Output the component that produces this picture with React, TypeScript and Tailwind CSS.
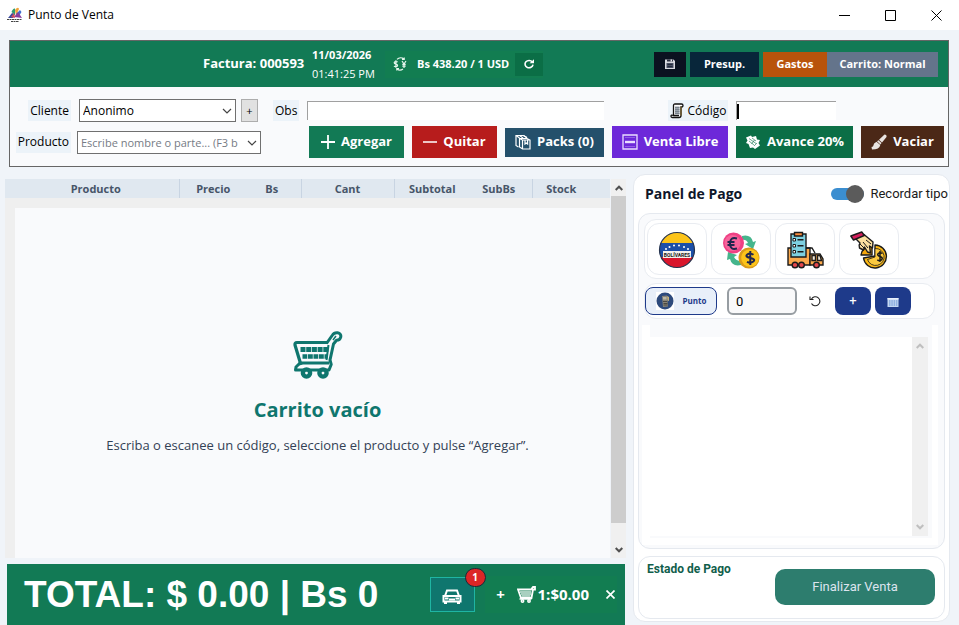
import clsx from 'clsx';
import { useState } from 'react';
import type { ReactNode } from 'react';

const COLUMNS = [
  { label: 'Producto', className: 'pl-2' },
  { label: 'Precio', className: 'w-[68px] border-l' },
  { label: 'Bs', className: 'w-[54px] pr-1' },
  { label: 'Cant', className: 'w-[93px] border-l' },
  { label: 'Subtotal', className: 'w-[76px] border-l' },
  { label: 'SubBs', className: 'w-[62px] pr-1' },
  { label: 'Stock', className: 'w-[78px] border-l pr-5' },
];

/* ---------- icons ---------- */

function AppLogo() {
  return (
    <svg viewBox="0 0 16 16" className="h-4 w-4" aria-hidden="true">
      <path d="M1 11l4-5 3 1-2 4z" fill="#3b4a9c" />
      <path d="M4.500 5Q6 1 8 1.500L8 8z" fill="#2f9e6e" />
      <path d="M8 3Q11-1 12 2L9 9z" fill="#f0a43a" />
      <path d="M9 7l4-4 1.500 2L12 9z" fill="#3f6fd0" />
      <path d="M7 10l4-5 4 6z" fill="#8a3d9e" />
      <path d="M4 10l3-4 1 5z" fill="#d1495b" />
      <path d="M0 12.500h15M4 14.500h8" stroke="#444" strokeWidth="1.200" strokeDasharray="2 .5" />
    </svg>
  );
}

function Chevron({ className = '' }: { className?: string }) {
  return (
    <svg viewBox="0 0 10 6" className={clsx('h-[6px] w-[10px]', className)} fill="none" aria-hidden="true">
      <path d="M1 1l4 4 4-4" stroke="currentColor" strokeWidth="1.2" />
    </svg>
  );
}

function ScrollArrow({ up = false }: { up?: boolean }) {
  return (
    <svg viewBox="0 0 8 6" className="h-[6px] w-[8px]" fill="none" aria-hidden="true">
      <path d={up ? 'M.7 5l3.3-3.3L7.3 5' : 'M.7 1L4 4.3 7.3 1'} stroke="currentColor" strokeWidth="2" />
    </svg>
  );
}

function ExchangeIcon() {
  return (
    <svg viewBox="0 0 14 14" className="h-[14px] w-[14px]" fill="none" stroke="#e6f7ee" strokeWidth="1.200" aria-hidden="true">
      <path d="M4.6 5.2C4 4.3 1.2 4.2 1.2 5.7c0 1.7 3.4 1 3.4 2.7 0 1.5-2.8 1.6-3.6.6M2.9 3.3v7.4" />
      <path d="M9 4l2 3 2-3M11 7v4M9.3 7.4h3.4M9.3 9.2h3.4" />
      <path d="M4 2.4C6 .4 9 .4 11 2.2M11.2.4v2H9M10 12c-2 1.600-4.400 1.400-6-.2M3.800 13.600v-2H6" />
    </svg>
  );
}

function RefreshIcon() {
  return (
    <svg viewBox="0 0 12 12" className="h-3 w-3" fill="none" aria-hidden="true">
      <path d="M9.300 4A4 3.600 0 1 0 10 6.600" stroke="#fff" strokeWidth="1.600" />
      <path d="M6.500 5.200h4.500V1.300z" fill="#fff" />
    </svg>
  );
}

function FloppyIcon() {
  return (
    <svg viewBox="0 0 12 12" className="h-3 w-3" aria-hidden="true">
      <path d="M1 1.500h8.500L11 3v8H1z" fill="#d9d9e0" />
      <path d="M3 1.500h6v2H3z" fill="#2b2f3f" />
      <path d="M6.600 1.500h1.400v2H6.600z" fill="#e8e8ee" />
      <path d="M2.500 5h7v5h-7z" fill="#4a5064" />
      <path d="M3.500 6.500h5M3.500 8.500h5" stroke="#1b2233" strokeWidth=".8" />
    </svg>
  );
}

function ScrollDocIcon() {
  return (
    <svg viewBox="0 0 14 16" className="h-4 w-[14px]" fill="none" stroke="#111" aria-hidden="true">
      <path d="M3.500 12.500V2.500Q3.500 1 5 1h6.500Q13 1 13 2.500T11 4v8.500Q11 14.500 9 14.500H2.500Q1 14.500 1 13t2.500-.5H9" fill="#fff" strokeWidth="1.300" />
      <path d="M5 3.500h4.500v8H5z" fill="#9aa3ad" stroke="none" />
      <path d="M5 4.500h4.500M5 6.500h4.500M5 8.500h4.500M5 10.500h4.500" stroke="#6b7580" strokeWidth=".7" />
      <path d="M11 3.500v9" strokeWidth="1.400" stroke="#6f5a2a" />
    </svg>
  );
}

function PlusIcon() {
  return (
    <svg viewBox="0 0 14 14" className="h-[14px] w-[14px]" aria-hidden="true">
      <path d="M7 0v14M0 7h14" stroke="#fff" strokeWidth="1.800" />
    </svg>
  );
}

function MinusIcon() {
  return (
    <svg viewBox="0 0 14 14" className="h-[14px] w-[14px]" aria-hidden="true">
      <path d="M0 7h14" stroke="#f3dcdc" strokeWidth="1.800" />
    </svg>
  );
}

function PackIcon() {
  return (
    <svg viewBox="0 0 16 16" className="h-4 w-4" fill="none" stroke="#fff" strokeWidth="1.200" aria-hidden="true">
      <path d="M3.500 13L1 11.500V1.500h7.500L12 3.500" />
      <path d="M1 1.500L4.500 4M4.500 1.500L8 4M8.500 1.500L12 4" />
      <path d="M4.500 4.500H12l3 1.500v9H7.500l-3-2zM4.500 4.500l3 1.500v9M7.500 6H15" />
      <path d="M10 6v4l1.300-1 1.300 1V6" />
    </svg>
  );
}

function FreeSaleIcon() {
  return (
    <svg viewBox="0 0 16 16" className="h-4 w-4" fill="none" stroke="#e9ddff" aria-hidden="true">
      <path d="M1 1h14v14H1z" strokeWidth="1.300" />
      <path d="M3 3.500h10M3 12.500h10" strokeWidth=".5" opacity=".6" />
      <path d="M3 8h10" strokeWidth="2.400" />
    </svg>
  );
}

function CashIcon() {
  return (
    <svg viewBox="0 0 16 16" className="h-4 w-4" aria-hidden="true">
      <path d="M1 3.500L6 1.500l1 1.500 4-1 1 3.500 3 .500-1.500 3 1.500 2.500-5 3.500L8 13.500l-3 .500-1.500-4-2.500-1 1.500-2.500z" fill="#fff" />
      <path d="M4 4.500l7 5M4 7l5 4M7 4l4 3M9.500 6l-3 4M12 9l-3 3" stroke="#0b6e46" strokeWidth=".6" />
    </svg>
  );
}

function BrushIcon() {
  return (
    <svg viewBox="0 0 16 16" className="h-4 w-4" fill="#e9e4e0" aria-hidden="true">
      <path d="M13.500.500q2.500 0 2 2.500L11 8.500 8 5.700z" />
      <path d="M7.500 6.200l3 2.800-1 1.500L6 7.300z" />
      <path d="M5.500 7.800l3.800 3.200Q8.500 15.500 1 15.500L.500 13 2 12.500q.500-3.500 3.500-4.700z" />
    </svg>
  );
}

function CartIcon() {
  return (
    <svg viewBox="0 0 50 48" className="h-12 w-[50px] text-[#0f766e]" fill="none" stroke="currentColor" aria-hidden="true">
      <path d="M35 11.500H4Q1.500 11.500 2 14l6 20" strokeWidth="3.200" />
      <path d="M33.500 12.500L39.500 4Q41 1.500 44.500 1.800q4 .700 3.200 4.500-.7 3-4.200 3L40.500 13 37 29l1.200 4.500L36 39H2.500l.500-3 4-4h29" strokeWidth="3" strokeLinejoin="round" />
      <path d="M40 9l3-4" strokeWidth="1.500" />
      <path d="M7.500 18.500h28" strokeWidth="5" strokeDasharray="5 .700" />
      <path d="M9.500 25.500h25" strokeWidth="4.500" strokeDasharray="4.800 .700" />
      <path d="M35.500 14l-2 15" strokeWidth="2" />
      <circle cx="13.500" cy="42" r="3.600" strokeWidth="4.400" />
      <circle cx="30" cy="42" r="3.600" strokeWidth="4.400" />
    </svg>
  );
}

function MiniCartIcon() {
  return (
    <svg viewBox="0 0 19 17" className="h-[17px] w-[19px]" fill="none" stroke="#fff" aria-hidden="true">
      <path d="M1 3.500h13L16 1h2v2.500h-2L14.500 12H4z" strokeWidth="1.800" />
      <path d="M3 6h11M4 8h10M4.500 10h9" strokeWidth="1.300" opacity=".85" />
      <path d="M2.500 13h12" strokeWidth="1.500" />
      <circle cx="5.500" cy="15" r="1.200" strokeWidth="1.500" />
      <circle cx="12" cy="15" r="1.200" strokeWidth="1.500" />
    </svg>
  );
}

function CarIcon() {
  return (
    <svg viewBox="0 0 20 16" className="h-4 w-5" fill="none" stroke="#fff" aria-hidden="true">
      <path d="M3 7l2-5.500h10L17 7" strokeWidth="2" />
      <path d="M1.500 7h17v5.500h-17z" strokeWidth="2" />
      <path d="M3 9.500h3.500M13.500 9.500H17M7 10.500h6" strokeWidth="1.800" />
      <path d="M3.500 12v3M16.500 12v3" strokeWidth="3" />
    </svg>
  );
}

function BolivaresIcon() {
  return (
    <svg viewBox="0 0 38 38" className="h-[38px] w-[38px]" aria-hidden="true">
      <clipPath id="bolivares-disc">
        <circle cx="19" cy="19" r="17.500" />
      </clipPath>
      <g clipPath="url(#bolivares-disc)">
        <path d="M0 0h38v12H0z" fill="#fcc419" />
        <path d="M0 12h38v14H0z" fill="#1c4fa8" />
        <path d="M0 26h38v12H0z" fill="#d9162c" />
      </g>
      <g fill="#fff">
        <circle cx="8" cy="18" r="1" />
        <circle cx="11.500" cy="16" r="1" />
        <circle cx="16" cy="14.500" r="1" />
        <circle cx="21" cy="14.500" r="1" />
        <circle cx="26" cy="16" r="1" />
        <circle cx="30" cy="18" r="1" />
      </g>
      <circle cx="19" cy="19" r="17.500" fill="none" stroke="#26334d" strokeWidth="1.200" />
      <path d="M5 20h28v7H5z" fill="#f4f1ec" />
      <text x="19" y="25.500" textAnchor="middle" fontSize="5" fontWeight="700" fill="#222" fontFamily="Roboto, sans-serif">
        BOLÍVARES
      </text>
    </svg>
  );
}

function CurrencyIcon() {
  return (
    <svg viewBox="0 0 38 38" className="h-[38px] w-[38px]" aria-hidden="true">
      <path d="M20 5q9-2 11 6l3-1-3 8-8-5 3-1q-2-4-6-3z" fill="#45b58c" />
      <path d="M19 34q-9 2-11-6l-3 1 1-8 9 3-3 2q2 4 7 4z" fill="#45b58c" />
      <circle cx="11.500" cy="12" r="10.500" fill="#ef4084" />
      <circle cx="10.500" cy="12" r="8" fill="#f7639b" />
      <path d="M15 7.500Q8 5.500 8 12.500t7 5M5.500 11h7M5.500 14h7" fill="none" stroke="#20264d" strokeWidth="2" />
      <circle cx="27" cy="27" r="10.500" fill="#d99a1b" />
      <circle cx="28" cy="27" r="8.800" fill="#fcc419" />
      <path d="M31.500 23.800Q28 21.300 25.300 23.500T28.300 27t3 3.500-6.300.300M28.300 20v14" fill="none" stroke="#20264d" strokeWidth="2" />
    </svg>
  );
}

function DeliveryIcon() {
  return (
    <svg viewBox="0 0 38 38" className="h-[38px] w-[38px]" stroke="#1b1b1b" strokeWidth="1.400" aria-hidden="true">
      <path d="M2 17h22v17H2z" fill="#fba94c" />
      <path d="M24 23h10l3 5v6H24z" fill="#fba94c" />
      <path d="M20 17h6l3 5" fill="none" />
      <path d="M26 24.500h3.500v5H26zM31.500 24.500h2.500l1.500 5h-4z" fill="#f6ead6" />
      <path d="M5 3h15v23H5z" fill="#7ed0e0" />
      <path d="M8.500 1.500h8v3.500h-8z" fill="#fb8c3c" />
      <path d="M7 7.500h2.500V10H7zM7 13.500h2.500V16H7zM7 19.500h2.500V22H7z" fill="#fff" strokeWidth="1" />
      <path d="M11.500 8.800h6M11.500 14.800h6M11.500 20.800h6" />
      <circle cx="9" cy="34" r="2.800" fill="#e5484d" />
      <circle cx="15.500" cy="34" r="2.800" fill="#e5484d" />
      <circle cx="30.500" cy="34" r="2.800" fill="#e5484d" />
    </svg>
  );
}

function HandCoinIcon() {
  return (
    <svg viewBox="0 0 38 38" className="h-[38px] w-[38px]" stroke="#1b1b1b" strokeWidth="1.400" strokeLinejoin="round" aria-hidden="true">
      <path d="M25 14a11.500 11.500 0 1 1-11.500 13L25 25z" fill="#fcb814" />
      <path d="M25 17.500a8.500 8.500 0 1 1-7.500 11L25 26z" fill="#fbc93f" strokeWidth=".8" />
      <path d="M11 24q1-8 11-9v9z" fill="#f5a70d" />
      <path d="M5 7l9-3.500L23 11l-.500 6-3-2 1 7-3-1-3-5-1 3-4-2q-1-3 .500-5z" fill="#fbe0a0" />
      <path d="M10 13l4 4M13 11l5 6M16 9l5 4" fill="none" strokeWidth="1" />
      <path d="M.800 5l11-4 2.500 3.500L3.500 9z" fill="#d41e5c" />
      <path d="M32.500 22.500Q30 20.800 28.300 22.500t1.700 3 1.600 3.200-4.300.200M30 20v11" fill="none" strokeWidth="1.500" />
    </svg>
  );
}

function TerminalIcon() {
  return (
    <svg viewBox="0 0 18 18" className="h-[18px] w-[18px]" aria-hidden="true">
      <path d="M0 0h18v18H0z" fill="#fff" />
      <circle cx="9" cy="9" r="8.500" fill="#2d4a7c" />
      <path d="M6 4l5-.500 1 11-5 .500z" fill="#8a8577" />
      <path d="M7 5h3.500v2.500H7z" fill="#b9b6a6" />
      <path d="M7 9.500h4M7.500 11.500h4M7.500 13h4" stroke="#3b3a36" strokeWidth=".8" />
      <path d="M11 4l2 1v4l-1.500-.500z" fill="#c8b37a" />
    </svg>
  );
}

function UndoIcon() {
  return (
    <svg viewBox="0 0 12 12" className="h-3 w-3" fill="none" stroke="#222" strokeWidth="1.100" aria-hidden="true">
      <path d="M2.500 4A4.500 4.500 0 1 1 2.500 8.500M1 1.500V4.500h3.500" />
    </svg>
  );
}

function KeypadIcon() {
  return (
    <svg viewBox="0 0 12 12" className="h-3 w-3" aria-hidden="true">
      <path d="M.500 3h11v9H.500z" fill="#c5d8f2" />
      <path d="M.500 3h11v1.500H.500z" fill="#e9f0fa" />
      <path d="M2 6h9M2 8h9M2 10h9" stroke="#5f8bd0" strokeDasharray="1.500 .800" />
    </svg>
  );
}

/* ---------- building blocks ---------- */

function FieldLabel({ htmlFor, children }: { htmlFor: string; children: ReactNode }) {
  return (
    <label htmlFor={htmlFor} className="flex h-[21px] shrink-0 items-center gap-1 bg-[#ecf3f9] px-[2px] text-[12px]">
      {children}
    </label>
  );
}

function ActionButton({ className, icon, children }: { className: string; icon: ReactNode; children: ReactNode }) {
  return (
    <button
      type="button"
      className={clsx(
        'flex shrink-0 items-center justify-center gap-[6px] text-[13px] font-bold whitespace-nowrap text-white',
        className,
      )}
    >
      {icon}
      {children}
    </button>
  );
}

function TitleBar() {
  return (
    <header className="flex h-[30px] shrink-0 items-center bg-white pl-[7px] text-[12px]">
      <AppLogo />
      <h1 className="ml-[5px]">Punto de Venta</h1>
      <div className="ml-auto flex h-full">
        <button type="button" aria-label="Minimizar" className="flex w-[46px] items-center justify-center">
          <svg viewBox="0 0 11 11" className="h-[11px] w-[11px]" stroke="#000">
            <path d="M0 5.500h11" />
          </svg>
        </button>
        <button type="button" aria-label="Maximizar" className="flex w-[46px] items-center justify-center">
          <svg viewBox="0 0 11 11" className="h-[11px] w-[11px]" fill="none" stroke="#000">
            <path d="M.500.500h10v10H.500z" />
          </svg>
        </button>
        <button type="button" aria-label="Cerrar" className="flex w-[46px] items-center justify-center">
          <svg viewBox="0 0 11 11" className="h-[11px] w-[11px]" stroke="#000">
            <path d="M.500.500l10 10M10.500.500l-10 10" />
          </svg>
        </button>
      </div>
    </header>
  );
}

function InvoiceBar() {
  return (
    <div className="flex h-[46px] items-center bg-[#127a55] pr-[10px] pl-[193px] text-white">
      <span className="w-[95px] shrink-0 text-[13px] font-bold whitespace-nowrap">Factura: 000593</span>
      <div className="ml-[14px] w-[62px] shrink-0 text-[11px] leading-[19px] whitespace-nowrap">
        <p className="font-bold">11/03/2026</p>
        <p>01:41:25 PM</p>
      </div>
      <div className="ml-[11px] flex h-[27px] shrink-0 items-center bg-[#127d51] pl-2 text-[11px] font-bold">
        <ExchangeIcon />
        <span className="ml-[10px]">Bs 438.20 / 1 USD</span>
        <button type="button" aria-label="Actualizar tasa" className="ml-[6px] flex h-[23px] w-7 items-center justify-center bg-[#0b6e46]">
          <RefreshIcon />
        </button>
      </div>
      <div className="ml-auto flex h-[25px] shrink-0 text-[11px] font-bold">
        <button type="button" aria-label="Guardar" className="mr-1 flex w-8 items-center justify-center bg-[#0b1220]">
          <FloppyIcon />
        </button>
        <button type="button" className="mr-1 w-[69px] bg-[#08263a]">
          Presup.
        </button>
        <button type="button" className="w-16 bg-[#b8530b]">
          Gastos
        </button>
        <button type="button" className="w-[111px] bg-[#64748b]">
          Carrito: Normal
        </button>
      </div>
    </div>
  );
}

function SaleForm() {
  return (
    <div className="grid grid-cols-[61px_192px_minmax(0,1fr)] items-center gap-y-1 pt-3 pr-1 pb-2">
      <div className="flex justify-end">
        <FieldLabel htmlFor="cliente">Cliente</FieldLabel>
      </div>
      <div className="flex pl-2">
        <div className="relative flex-1">
          <select id="cliente" className="block h-[23px] w-full appearance-none border border-[#707070] bg-white pl-[3px] text-[12px]">
            <option>Anonimo</option>
          </select>
          <Chevron className="pointer-events-none absolute top-[9px] right-[4px] text-[#444]" />
        </div>
        <button type="button" aria-label="Nuevo cliente" className="ml-[5px] h-[23px] w-[17px] border border-[#adadad] bg-[#e1e1e1] text-[11px] leading-none">
          +
        </button>
        <span className="w-[5px]" />
      </div>
      <div className="flex items-center pl-[10px]">
        <FieldLabel htmlFor="obs">Obs</FieldLabel>
        <input id="obs" type="text" className="ml-2 h-[19px] w-[297px] min-w-0 border-t border-l border-[#a0a0a0] bg-white px-1 text-[12px] outline-none" />
        <div className="ml-2 flex w-[116px] shrink-0 justify-end">
          <FieldLabel htmlFor="codigo">
            <ScrollDocIcon />
            Código
          </FieldLabel>
        </div>
        <div className="ml-2 flex h-[19px] w-[100px] shrink-0 items-center border-t border-l border-[#a0a0a0] bg-white">
          <span className="h-[15px] w-[2px] shrink-0 bg-black" />
          <input id="codigo" type="text" className="w-full min-w-0 px-[2px] text-[12px] outline-none" />
        </div>
      </div>

      <div className="flex justify-end">
        <FieldLabel htmlFor="producto">Producto</FieldLabel>
      </div>
      <div className="relative mr-[2px] ml-[6px]">
        <input
          id="producto"
          type="text"
          placeholder="Escribe nombre o parte... (F3 b"
          className="block h-[23px] w-full border border-[#707070] bg-white pr-4 pl-[3px] text-[11px] outline-none placeholder:text-[#767b85]"
        />
        <Chevron className="pointer-events-none absolute top-[9px] right-[4px] text-[#444]" />
      </div>
      <div className="flex items-center gap-2 pl-[46px]">
        <ActionButton className="h-8 w-[95px] bg-[#127a55]" icon={<PlusIcon />}>
          Agregar
        </ActionButton>
        <ActionButton className="h-8 w-[85px] bg-[#b71c1c]" icon={<MinusIcon />}>
          Quitar
        </ActionButton>
        <ActionButton className="h-[29px] w-[99px] bg-[#24506b]" icon={<PackIcon />}>
          Packs (0)
        </ActionButton>
        <ActionButton className="h-8 w-[116px] bg-[#6d28d9]" icon={<FreeSaleIcon />}>
          Venta Libre
        </ActionButton>
        <ActionButton className="h-8 w-[117px] bg-[#0b6e46]" icon={<CashIcon />}>
          Avance 20%
        </ActionButton>
        <ActionButton className="h-8 w-[83px] bg-[#4b2817]" icon={<BrushIcon />}>
          Vaciar
        </ActionButton>
      </div>
    </div>
  );
}

function CartTable() {
  return (
    <section className="flex flex-1">
      <div className="flex min-w-0 flex-1 flex-col bg-[#efefef]">
        <table className="h-[19px] w-full table-fixed border-collapse bg-[#e0e8f0] text-[11px] leading-[15px] text-[#475569]">
          <thead>
            <tr>
              {COLUMNS.map((col) => (
                <th key={col.label} scope="col" className={clsx('border-[#c8d4e2] font-bold', col.className)}>
                  {col.label}
                </th>
              ))}
            </tr>
          </thead>
        </table>
        <div className="mt-[10px] ml-[10px] flex flex-1 flex-col items-center justify-center bg-[#f9fafc] pt-5 pl-[10px]">
          <CartIcon />
          <h2 className="mt-4 text-[20px] leading-[30px] font-bold text-[#0f766e]">Carrito vacío</h2>
          <p className="mt-[10px] text-[13px] leading-5 text-[#334155]">
            Escriba o escanee un código, seleccione el producto y pulse “Agregar”.
          </p>
        </div>
      </div>
      <div className="ml-px flex w-[15px] shrink-0 flex-col items-center bg-[#f0f0f0] text-[#505050]">
        <div className="flex h-[17px] items-center">
          <ScrollArrow up />
        </div>
        <div className="w-full flex-1 bg-[#cdcdcd]" />
        <div className="flex h-[35px] items-end pb-[5px]">
          <ScrollArrow />
        </div>
      </div>
    </section>
  );
}

function TotalBar() {
  return (
    <footer className="mt-[6px] mr-px ml-[2px] flex h-[61px] shrink-0 items-center bg-[#127a55] pr-2 pl-[17px] text-white">
      <p className="[font-family:'Liberation_Sans',sans-serif] text-[37px] leading-none font-bold whitespace-nowrap">TOTAL: $ 0.00 | Bs 0</p>
      <div className="relative ml-auto">
        <button type="button" aria-label="Vehículos" className="flex h-[35px] w-[45px] items-center justify-center border border-[#1fb5a3] bg-[#0f766e] pt-1">
          <CarIcon />
        </button>
        <span className="absolute -top-[9px] -right-[11px] flex h-[19px] w-[21px] items-center justify-center rounded-full border border-[#1f2937] bg-[#dc2626] text-[10px] font-bold">
          1
        </span>
      </div>
      <div className="ml-[10px] flex h-[37px] items-center bg-[#127d51] pl-[10px] text-[15px] font-bold">
        <button type="button" aria-label="Nuevo carrito" className="w-[12px]">
          +
        </button>
        <button type="button" className="ml-[10px] flex items-center gap-[2px]">
          <MiniCartIcon />
          1:$0.00
        </button>
        <button type="button" aria-label="Cerrar carrito" className="ml-[14px] flex w-[14px] justify-center">
          <svg viewBox="0 0 9 9" className="h-[9px] w-[9px]" stroke="#fff" strokeWidth="1.700">
            <path d="M.500.500l8 8M8.500.500l-8 8" />
          </svg>
        </button>
      </div>
    </footer>
  );
}

const PAYMENT_TYPES = [
  { name: 'Bolívares', icon: <BolivaresIcon /> },
  { name: 'Divisas', icon: <CurrencyIcon /> },
  { name: 'Delivery', icon: <DeliveryIcon /> },
  { name: 'Avance', icon: <HandCoinIcon /> },
];

function PaymentPanel() {
  const [remember, setRemember] = useState(true);

  return (
    <aside className="flex w-[317px] shrink-0 flex-col rounded-xl border border-[#e5e9ef] bg-white px-[4px] pb-[2px]">
      <div className="-mr-[3px] flex h-[37px] items-center pl-[7px]">
        <h2 className="text-[14px] font-bold text-[#0f172a]">Panel de Pago</h2>
        <label className="ml-auto flex cursor-pointer items-center gap-[6px] [font-family:Roboto,sans-serif] text-[13px] whitespace-nowrap text-[#1a1a1a]">
          <input type="checkbox" checked={remember} onChange={(e) => setRemember(e.target.checked)} className="sr-only" />
          <span className={clsx('flex h-3 w-[33px] items-center rounded-full', remember ? 'justify-end bg-[#3b8ed0]' : 'bg-[#939ba2]')}>
            <span className="h-[18px] w-[18px] rounded-full bg-[#5b5b5b]" />
          </span>
          Recordar tipo
        </label>
      </div>

      <div className="mt-px flex flex-1 flex-col rounded-xl border border-[#e5e9ef] bg-[#f9fafc] px-[3px] pt-[5px] pb-[3px]">
        <div className="mr-[6px] ml-[2px] flex gap-1 rounded-xl border border-[#e9ecf1] bg-white px-[2px] py-[3px]">
          {PAYMENT_TYPES.map((type) => (
            <button
              key={type.name}
              type="button"
              aria-label={type.name}
              className="flex h-[52px] w-[60px] items-center justify-center rounded-xl border border-[#e9ecf1] bg-white pt-[2px]"
            >
              {type.icon}
            </button>
          ))}
        </div>

        <div className="mt-1 mr-[6px] ml-[2px] flex items-center rounded-xl border border-[#e9ecf1] bg-white py-[3px]">
          <button
            type="button"
            className="flex h-7 w-[72px] items-center justify-center gap-[9px] rounded-lg border border-[#1e3a8a] bg-[#e8eff9] text-[8px] font-bold text-[#1e3a8a]"
          >
            <TerminalIcon />
            Punto
          </button>
          <input
            type="text"
            aria-label="Monto"
            defaultValue="0"
            className="ml-[10px] h-7 w-[70px] rounded-md border-2 border-[#979da2] bg-[#f9f9fa] px-[7px] [font-family:Roboto,sans-serif] text-[13px] outline-none"
          />
          <button type="button" aria-label="Restablecer" className="ml-[6px] flex h-7 w-6 items-center justify-center">
            <UndoIcon />
          </button>
          <button type="button" aria-label="Agregar pago" className="ml-2 h-7 w-9 rounded-lg bg-[#1e3a8a] [font-family:Roboto,sans-serif] text-[13px] text-white">
            +
          </button>
          <button type="button" aria-label="Teclado" className="ml-1 flex h-7 w-9 items-center justify-center rounded-lg bg-[#1e3a8a]">
            <KeypadIcon />
          </button>
        </div>

        <div className="mt-[6px] mr-[3px] flex flex-1 flex-col bg-white px-2 pb-[7px]">
          <div className="-mr-[2px] flex flex-1 flex-col bg-[#f9fafc] pt-3 pr-1 pb-[2px]">
            <div className="flex flex-1 justify-end bg-white">
              <div className="flex w-4 flex-col items-center justify-between bg-[#f0f0f0] py-[6px] text-[#bfbfbf]">
                <ScrollArrow up />
                <ScrollArrow />
              </div>
            </div>
          </div>
        </div>
      </div>

      <div className="mt-[7px] flex h-[63px] shrink-0 justify-between rounded-xl border border-[#e5e9ef] bg-white pr-[9px] pl-2">
        <h3 className="mt-1 [font-family:Roboto,sans-serif] text-[12px] leading-4 font-bold text-[#115e4b]">Estado de Pago</h3>
        <button type="button" className="mt-3 h-9 w-40 rounded-[10px] bg-[#2d7d6e] [font-family:Roboto,sans-serif] text-[13px] text-[#dce4ee]">
          Finalizar Venta
        </button>
      </div>
    </aside>
  );
}

export default function App() {
  return (
    <div className="flex min-h-screen w-full flex-col bg-[#f0f4f9] [font-family:'Open_Sans',sans-serif] text-black">
      <TitleBar />
      <section className="mt-[10px] mr-[10px] ml-[9px] border border-[#666]">
        <InvoiceBar />
        <div className="bg-[#f9fafc]">
          <SaleForm />
        </div>
      </section>
      <main className="flex flex-1 gap-[7px] pr-[9px] pl-[5px]">
        <div className="flex min-w-0 flex-1 flex-col pt-3">
          <CartTable />
          <TotalBar />
        </div>
        <div className="flex shrink-0 pt-[7px] pb-[3px]">
          <PaymentPanel />
        </div>
      </main>
    </div>
  );
}
